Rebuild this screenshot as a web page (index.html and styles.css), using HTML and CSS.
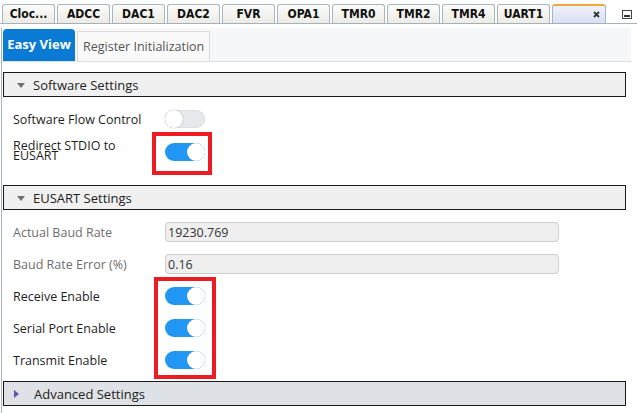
FILE: index.html
```html
<!DOCTYPE html>
<html>
<head>
<meta charset="utf-8">
<link rel="stylesheet" href="styles.css">
</head>
<body>
<div class="tabbar">
  <div class="tab">Cloc...</div>
  <div class="tab">ADCC</div>
  <div class="tab">DAC1</div>
  <div class="tab">DAC2</div>
  <div class="tab">FVR</div>
  <div class="tab">OPA1</div>
  <div class="tab">TMR0</div>
  <div class="tab">TMR2</div>
  <div class="tab">TMR4</div>
  <div class="tab">UART1</div>
  <div class="tab active"><svg class="close" width="7" height="7" viewBox="0 0 7 7"><path d="M1 1L6 6M6 1L1 6" stroke="#333" stroke-width="1.8"/></svg></div>
  <div class="minbtn"><svg width="10" height="9" viewBox="0 0 10 9"><rect x="0.5" y="0.5" width="9" height="8" fill="#fafafa" stroke="#444"/><rect x="2" y="5" width="6" height="2" fill="#333"/></svg></div>
</div>
<div class="content">
  <div class="subtabs">
    <div class="subtab sel">Easy View</div>
    <div class="subtab">Register Initialization</div>
  </div>

  <div class="section first">
    <div class="sec-head"><span class="tri-down"></span>Software Settings</div>
    <div class="sec-body sw">
      <div class="row"><div class="label">Software Flow Control</div><div class="toggle"></div></div>
      <div class="row tall"><div class="label wrap">Redirect STDIO to EUSART</div><div class="toggle on"></div></div>
    </div>
  </div>

  <div class="section">
    <div class="sec-head"><span class="tri-down"></span>EUSART Settings</div>
    <div class="sec-body eu">
      <div class="row"><div class="label dim">Actual Baud Rate</div><div class="field">19230.769</div></div>
      <div class="row"><div class="label dim">Baud Rate Error (%)</div><div class="field">0.16</div></div>
      <div class="row"><div class="label">Receive Enable</div><div class="toggle on"></div></div>
      <div class="row"><div class="label">Serial Port Enable</div><div class="toggle on"></div></div>
      <div class="row"><div class="label">Transmit Enable</div><div class="toggle on"></div></div>
    </div>
  </div>

  <div class="section">
    <div class="sec-head adv"><span class="tri-right"></span>Advanced Settings</div>
  </div>
</div>
<div class="mark m1"></div>
<div class="mark m2"></div>
</body>
</html>
```

FILE: styles.css
```css
html, body {
  margin: 0;
  padding: 0;
}
body {
  width: 637px;
  height: 413px;
  overflow: hidden;
  background: #ffffff;
  position: relative;
  font-family: "Open Sans", "Noto Sans", sans-serif;
  font-size: 12.5px;
  color: #1e1e1e;
}

/* top tab bar */
.tabbar {
  display: flex;
  align-items: flex-end;
  gap: 2px;
  height: 19px;
  padding: 4px 0 0 2px;
  border-bottom: 1px solid #a4b0bc;
}
.tab {
  box-sizing: border-box;
  width: 53px;
  height: 19px;
  border: 1px solid #a9b5c2;
  border-bottom: none;
  border-radius: 3px 3px 0 0;
  background: linear-gradient(#fcfcfa, #ecebe4);
  font-family: "DejaVu Sans Condensed", "DejaVu Sans", sans-serif;
  font-stretch: condensed;
  font-weight: bold;
  font-size: 12px;
  line-height: 18px;
  text-align: center;
  color: #111;
}
.tab.active {
  width: 54px;
  border-top: 2px solid #f2a73a;
  background: linear-gradient(#eef1fb, #d9dff3);
  display: flex;
  justify-content: flex-end;
  align-items: center;
  padding-right: 5px;
}
.close { display: block; }
.minbtn {
  margin-left: auto;
  margin-right: 5px;
  align-self: center;
  margin-top: 2px;
  height: 9px;
}
.minbtn svg { display: block; }

/* content */
.content {
  margin-left: 1px;
  padding-left: 1px;
  border-left: 1px solid #a8b4c0;
  height: 389px;
}
.subtabs {
  box-sizing: border-box;
  width: 628px;
  height: 34px;
  margin-top: 4px;
  padding-top: 1px;
  background: #f6f7f9;
  border-bottom: 1px solid #dcdde0;
  display: flex;
  align-items: flex-end;
  gap: 2px;
}
.subtab {
  box-sizing: border-box;
  height: 30px;
  padding: 0 5px;
  border: 1px solid #dcdcdc;
  border-bottom: none;
  background: #f9f9f9;
  color: #555;
  font-size: 12.5px;
  line-height: 29px;
}
.subtab.sel {
  height: 32px;
  width: 72px;
  padding: 0;
  text-align: center;
  border: none;
  border-radius: 4px 4px 0 0;
  background: #0a7bd5;
  color: #fff;
  font-weight: bold;
  font-size: 13px;
  line-height: 31px;
}

.section.first { margin-top: 10px; }
.sec-head {
  box-sizing: border-box;
  width: 623px;
  height: 25px;
  border: 1px solid #1a1a1a;
  background: #f0f0f0;
  display: flex;
  align-items: center;
  padding-left: 13px;
  font-size: 13px;
  color: #222;
}
.sec-head.adv { background: #dee1e5; padding-left: 10px; }
.tri-down {
  width: 0;
  height: 0;
  border-left: 4.5px solid transparent;
  border-right: 4.5px solid transparent;
  border-top: 5px solid #727272;
  margin-right: 8px;
  margin-top: 1px;
}
.tri-right {
  width: 0;
  height: 0;
  border-top: 4px solid transparent;
  border-bottom: 4px solid transparent;
  border-left: 5px solid #5a5aa6;
  margin-right: 15px;
}
.sec-body.sw { padding: 6px 0 16px; }
.sec-body.eu { padding: 6px 0 5px; }

.row {
  display: flex;
  align-items: center;
  height: 32px;
  padding-left: 10px;
}
.row.tall { height: 34px; }
.label {
  width: 145px;
  margin-right: 7px;
  white-space: normal;
}
.label.wrap { line-height: 10px; margin-top: -2px; }
.label.dim { color: #6e6e6e; }

.toggle {
  position: relative;
  width: 40px;
  height: 18px;
  border-radius: 9px;
  background: #e6e8eb;
  box-shadow: inset 0 0 0 1px #dde0e4;
}
.toggle::after {
  content: "";
  position: absolute;
  top: 0;
  left: 0;
  width: 18px;
  height: 18px;
  border-radius: 50%;
  background: #fff;
  box-shadow: 0 0 1.5px rgba(0, 0, 0, 0.35);
}
.toggle.on {
  background: #2196f3;
  box-shadow: none;
}
.toggle.on::after {
  left: 22px;
  box-shadow: 0 0 1px rgba(0, 0, 0, 0.15);
}

.field {
  box-sizing: border-box;
  width: 394px;
  height: 20px;
  border: 1px solid #cdcdcd;
  border-radius: 4px;
  background: #efefef;
  padding-left: 2px;
  color: #333;
  font-size: 12.5px;
  line-height: 20px;
}

/* red annotation boxes */
.mark {
  position: absolute;
  box-sizing: border-box;
  border: 4px solid #ec1c24;
}
.m1 { left: 152px; top: 132px; width: 60px; height: 43px; }
.m2 { left: 154px; top: 277px; width: 62px; height: 102px; }
```
